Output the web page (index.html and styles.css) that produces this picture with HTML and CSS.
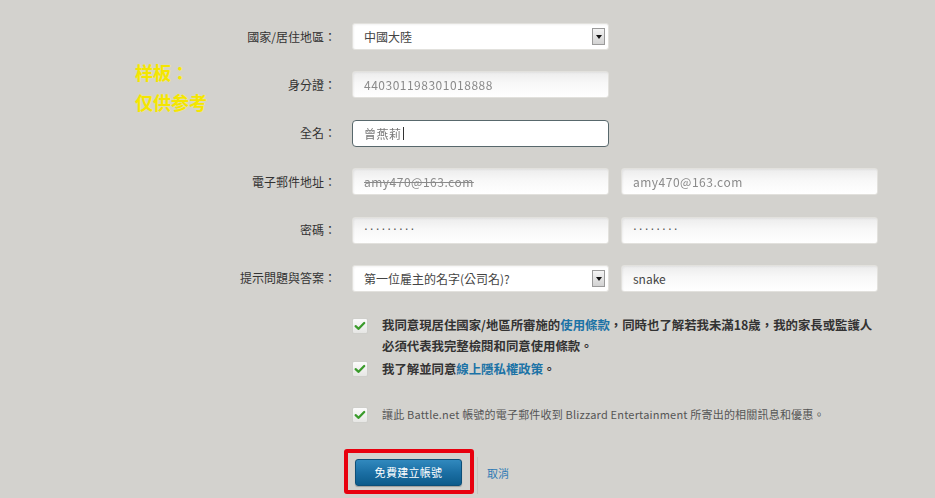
FILE: index.html
```html
<!DOCTYPE html>
<html lang="zh-Hant">
<head>
<meta charset="utf-8">
<title>建立帳號</title>
<link rel="stylesheet" href="styles.css">
</head>
<body>
<div class="watermark">样板：<br>仅供参考</div>
<main class="page">
  <div class="form-grid">
    <div class="lbl">國家/居住地區：</div>
    <div class="field select"><span>中國大陸</span><span class="arrow"></span></div>
    <div></div>

    <div class="lbl">身分證：</div>
    <div class="field"><span class="blur">440301198301018888</span></div>
    <div></div>

    <div class="lbl">全名：</div>
    <div class="field focused"><span class="blur dark">曾燕莉</span><span class="caret"></span></div>
    <div></div>

    <div class="lbl">電子郵件地址：</div>
    <div class="field"><span class="blur strike">amy470@163.com</span></div>
    <div class="field"><span class="blur">amy470@163.com</span></div>

    <div class="lbl">密碼：</div>
    <div class="field"><span class="dots">·········</span></div>
    <div class="field"><span class="dots">········</span></div>

    <div class="lbl">提示問題與答案：</div>
    <div class="field select"><span>第一位雇主的名字(公司名)?</span><span class="arrow"></span></div>
    <div class="field"><span>snake</span></div>
  </div>

  <div class="agreements">
    <div class="agree big">
      <span class="check"><svg viewBox="0 0 16 16" width="14" height="14"><path d="M3 8.2 L6.4 11.2 L12.8 4.6" fill="none" stroke="#3a9b2b" stroke-width="2.6" stroke-linecap="round" stroke-linejoin="round"/></svg></span>
      <p>我同意現居住國家/地區所審施的<a href="#">使用條款</a>，同時也了解若我未滿18歲，我的家長或監護人<br>必須代表我完整檢閱和同意使用條款。</p>
    </div>
    <div class="agree big second">
      <span class="check"><svg viewBox="0 0 16 16" width="14" height="14"><path d="M3 8.2 L6.4 11.2 L12.8 4.6" fill="none" stroke="#3a9b2b" stroke-width="2.6" stroke-linecap="round" stroke-linejoin="round"/></svg></span>
      <p>我了解並同意<a href="#">線上隱私權政策</a>。</p>
    </div>
    <div class="agree small">
      <span class="check"><svg viewBox="0 0 16 16" width="14" height="14"><path d="M3 8.2 L6.4 11.2 L12.8 4.6" fill="none" stroke="#3a9b2b" stroke-width="2.6" stroke-linecap="round" stroke-linejoin="round"/></svg></span>
      <p>讓此 Battle.net 帳號的電子郵件收到 Blizzard Entertainment 所寄出的相關訊息和優惠。</p>
    </div>
  </div>

  <div class="actions">
    <div class="highlight"><button class="submit" type="button">免費建立帳號</button></div>
    <span class="divider"><a href="#" class="cancel">取消</a></span>
  </div>
</main>
</body>
</html>
```
FILE: styles.css
```css
html, body {
  margin: 0;
  padding: 0;
}
body {
  background: #d3d2ce;
  width: 935px;
  height: 498px;
  overflow: hidden;
  position: relative;
  font-family: "Noto Sans CJK TC", "Noto Sans", sans-serif;
  color: #333;
}
.watermark {
  position: absolute;
  left: 135px;
  top: 57px;
  font-family: "Noto Sans CJK SC", sans-serif;
  font-weight: 700;
  font-size: 18px;
  line-height: 30px;
  color: #f4e600;
  text-shadow: 0 0 2px rgba(250, 240, 120, 0.7);
}
.page {
  padding-top: 23px;
}
.form-grid {
  display: grid;
  grid-template-columns: 340px 257px 257px;
  grid-auto-rows: 27px;
  column-gap: 12px;
  row-gap: 21.4px;
}
.lbl {
  align-self: center;
  text-align: right;
  font-size: 12px;
  color: #333;
  line-height: 16px;
  margin-right: 4px;
}
.field {
  box-sizing: border-box;
  height: 27px;
  border: 1px solid #e2e1dd;
  border-radius: 3px;
  background: linear-gradient(to bottom, #ececec 0%, #f8f8f8 45%, #ffffff 100%);
  box-shadow: inset 1px 1px 2px rgba(0,0,0,0.05);
  display: flex;
  align-items: center;
  padding: 0 11px;
  font-size: 12px;
  color: #444;
  position: relative;
}
.field.select {
  background: #fff;
}
.field.focused {
  border: 1px solid #58686c;
  border-radius: 4px;
  background: #fff;
  box-shadow: none;
}
.arrow {
  position: absolute;
  right: 3px;
  top: 4px;
  width: 13px;
  height: 17px;
  box-sizing: border-box;
  border: 1px solid #9a9a9a;
  background: linear-gradient(to bottom, #f4f4f4, #d2d2d2);
}
.arrow::after {
  content: "";
  position: absolute;
  left: 3px;
  top: 6px;
  border-left: 3px solid transparent;
  border-right: 3px solid transparent;
  border-top: 4px solid #111;
}
.blur {
  color: #8a8a8a;
  filter: blur(0.7px);
  letter-spacing: 0.5px;
}
.blur.dark {
  color: #777;
}
.strike {
  text-decoration: line-through;
}
.caret {
  display: inline-block;
  width: 1px;
  height: 13px;
  background: #333;
  margin-left: 1px;
}
.dots {
  font-family: "DejaVu Sans", sans-serif;
  font-size: 12px;
  letter-spacing: 2px;
  color: #555;
}
.agreements {
  margin-left: 352px;
  margin-top: 23.5px;
}
.agree {
  display: flex;
  align-items: flex-start;
  gap: 14px;
}
.agree p {
  margin: 0;
  line-height: 21px;
}
.agree.big p {
  font-size: 12.4px;
  font-weight: 700;
  color: #333;
}
.agree.second {
  margin-top: 1.5px;
}
.agree.small {
  margin-top: 24.5px;
}
.agree.small p {
  font-size: 11px;
  color: #555;
  letter-spacing: 0.2px;
}
.check {
  flex: none;
  box-sizing: border-box;
  width: 16px;
  height: 16px;
  margin-top: 2.5px;
  border: 1px solid #cfcfcb;
  border-radius: 2px;
  background: linear-gradient(to bottom, #fbfbfb, #e6e6e4);
  display: flex;
  align-items: center;
  justify-content: center;
}
.agree a {
  color: #1c73a6;
  text-decoration: none;
}
.actions {
  margin-top: 23.5px;
  margin-left: 344px;
  display: flex;
  align-items: stretch;
}
.highlight {
  border: 4px solid #e8000e;
  border-radius: 3px;
  padding: 6px 8px 4px 7px;
  display: flex;
}
.submit {
  width: 107px;
  height: 27px;
  border: 1px solid #0d4f78;
  border-radius: 3px;
  background: linear-gradient(to bottom, #3189be 0%, #1b6fa4 50%, #0c5b8b 100%);
  color: #fff;
  font-family: "Noto Sans CJK TC", sans-serif;
  font-size: 11px;
  letter-spacing: 0.3px;
  padding: 0;
  box-shadow: 0 1px 1px rgba(0,0,0,0.25);
}
.divider {
  margin-left: 3px;
  margin-top: 8px;
  border-left: 1px solid #c4c3bf;
  padding-left: 9px;
  display: flex;
  align-items: center;
}
.cancel {
  color: #2d79b4;
  font-size: 11px;
  text-decoration: none;
  margin-top: -4px;
}
```
